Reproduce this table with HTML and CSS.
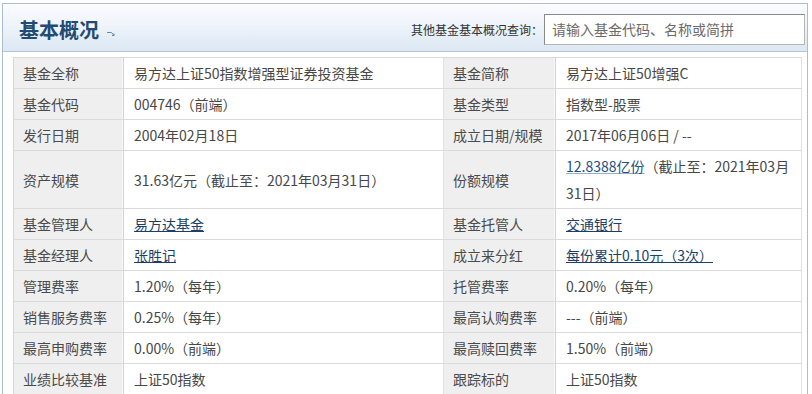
FILE: index.html
```html
<!DOCTYPE html>
<html lang="zh-CN">
<head>
<meta charset="utf-8">
<title>基本概况</title>
<link rel="stylesheet" href="styles.css">
</head>
<body>
<div class="panel">
  <div class="panel-head">
    <div class="title">
      <h2>基本概况</h2>
      <svg class="title-icon" width="9" height="6" viewBox="0 0 9 6"><path d="M0 1.5H4.5L7 4.5M7 4.5V2.5M7 4.5H5" fill="none" stroke="#6d87a3" stroke-width="1"/></svg>
    </div>
    <div class="search">
      <span class="search-label">其他基金基本概况查询：</span>
      <div class="search-box">请输入基金代码、名称或简拼</div>
    </div>
  </div>
  <div class="panel-body">
    <table class="info">
      <colgroup>
        <col class="c-label1"><col class="c-val1"><col class="c-label2"><col>
      </colgroup>
      <tr><th>基金全称</th><td>易方达上证50指数增强型证券投资基金</td><th>基金简称</th><td>易方达上证50增强C</td></tr>
      <tr><th>基金代码</th><td>004746（前端）</td><th>基金类型</th><td>指数型-股票</td></tr>
      <tr><th>发行日期</th><td>2004年02月18日</td><th>成立日期/规模</th><td>2017年06月06日 / --</td></tr>
      <tr><th>资产规模</th><td>31.63亿元（截止至：2021年03月31日）</td><th>份额规模</th><td><a class="lite">12.8388亿份</a>（截止至：2021年03月<br>31日）</td></tr>
      <tr><th>基金管理人</th><td><a>易方达基金</a></td><th>基金托管人</th><td><a>交通银行</a></td></tr>
      <tr><th>基金经理人</th><td><a>张胜记</a></td><th>成立来分红</th><td><a>每份累计0.10元（3次）</a></td></tr>
      <tr><th>管理费率</th><td>1.20%（每年）</td><th>托管费率</th><td>0.20%（每年）</td></tr>
      <tr><th>销售服务费率</th><td>0.25%（每年）</td><th>最高认购费率</th><td>---（前端）</td></tr>
      <tr><th>最高申购费率</th><td>0.00%（前端）</td><th>最高赎回费率</th><td>1.50%（前端）</td></tr>
      <tr><th>业绩比较基准</th><td>上证50指数</td><th>跟踪标的</th><td>上证50指数</td></tr>
    </table>
  </div>
</div>
</body>
</html>
```

FILE: styles.css
```css
html, body {
  margin: 0;
  padding: 0;
  background: #ffffff;
  font-family: "Noto Sans CJK SC", "Noto Sans", sans-serif;
  color: #444444;
  overflow: hidden;
}

.panel {
  margin: 3px 4px 0 2px;
  border: 1px solid #a9bed3;
  border-bottom: none;
  height: 400px;
}

.panel-head {
  height: 48px;
  padding: 4px 2px 0 16px;
  box-sizing: border-box;
  display: flex;
  align-items: center;
  justify-content: space-between;
  background: linear-gradient(to bottom, #fbfcfe 0%, #eef4fa 45%, #dbe7f3 100%);
  border-bottom: 1px solid #b4c6d8;
}

.title {
  display: flex;
  align-items: center;
  gap: 8px;
}

.title h2 {
  margin: 0;
  font-size: 20px;
  font-weight: bold;
  color: #234a70;
  line-height: 26px;
}

.title-icon {
  margin-top: 8px;
}

.search {
  display: flex;
  align-items: center;
  gap: 1px;
}

.search-label {
  font-size: 12px;
  color: #333333;
}

.search-box {
  height: 29px;
  border: 1px solid #8a8a8a;
  border-right-color: #b5b5b5;
  border-bottom-color: #b5b5b5;
  background: #ffffff;
  font-size: 14px;
  line-height: 29px;
  padding-left: 7px;
  box-sizing: content-box;
  color: #6a6a6a;
  width: 252px;
}

.panel-body {
  padding: 5px 5px 0 10px;
}

.info {
  width: 100%;
  table-layout: fixed;
  border-collapse: collapse;
  font-size: 14px;
  border-left: 1px solid #d7d7d7;
  border-right: 1px solid #d7d7d7;
}

.c-label1 { width: 110px; }
.c-val1 { width: 320px; }
.c-label2 { width: 112px; }

.info th,
.info td {
  text-align: left;
  font-weight: normal;
  line-height: 27px;
  padding: 2px 0 1px 10px;
  border-top: 1px solid #dadada;
  border-bottom: 1px solid #dadada;
  vertical-align: middle;
  white-space: nowrap;
}

.info th {
  padding-left: 9px;
  background: #efefef;
  color: #4a4a4a;
  border-right: 1px solid #d4d4d4;
  box-shadow: inset -1px 0 0 #f8f8f8;
}

.info td {
  background: #ffffff;
  color: #474747;
  border-right: 1px solid #e2e2e2;
}

.info a {
  color: #1a3f69;
  text-decoration: underline;
  cursor: pointer;
}

.info a.lite {
  color: #24507e;
  text-decoration-color: #8fb1d6;
}
```
